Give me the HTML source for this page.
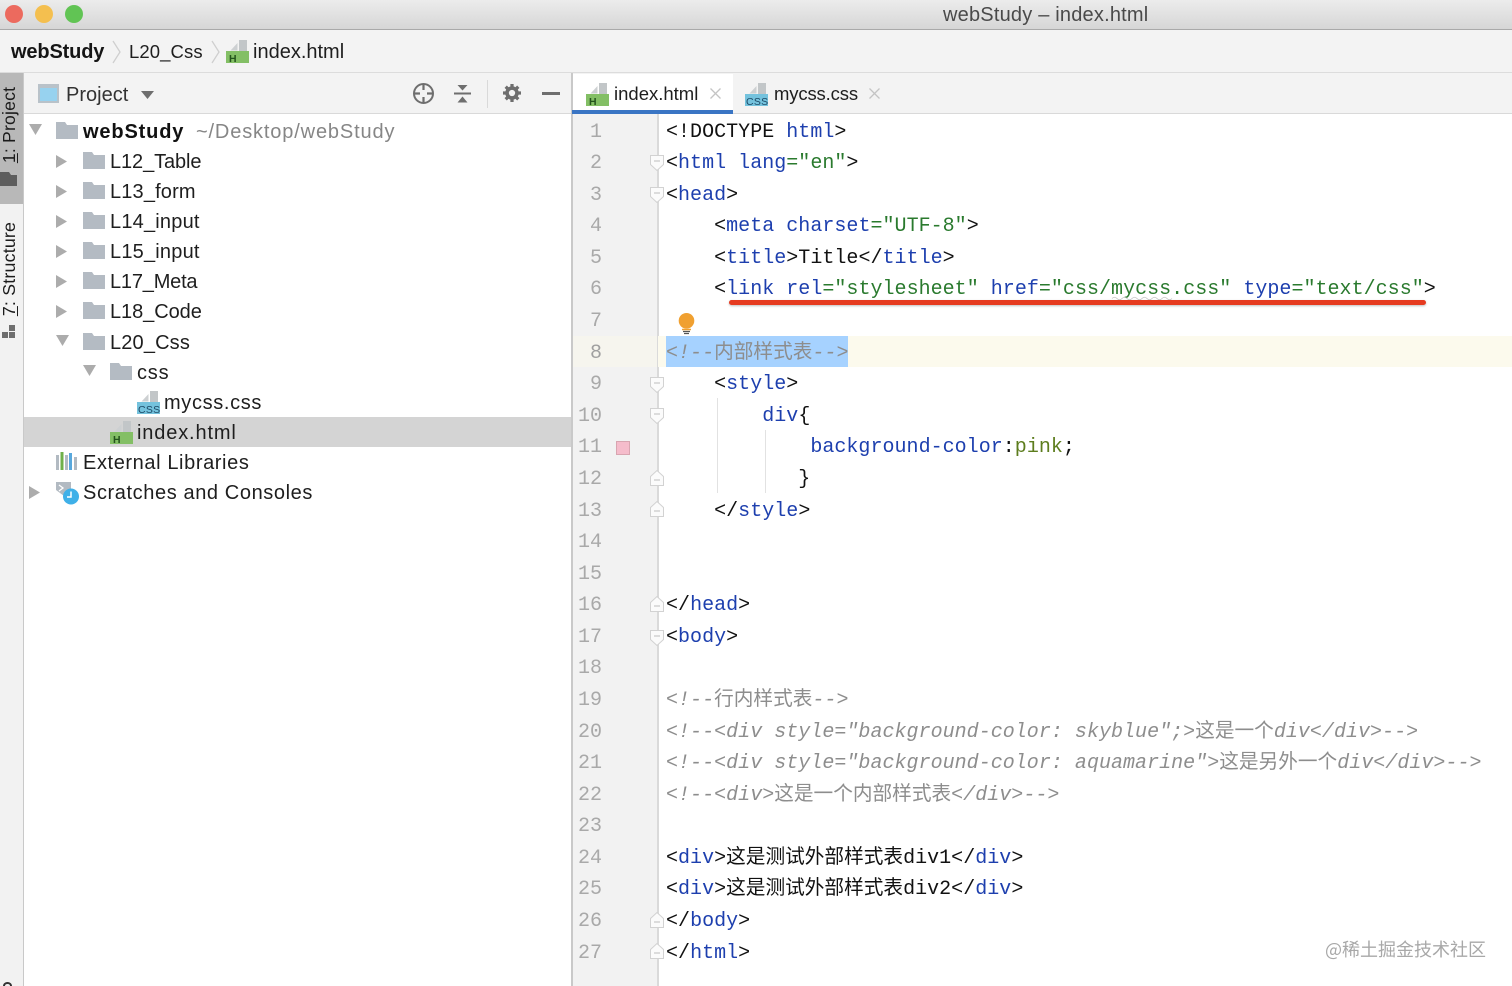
<!DOCTYPE html>
<html lang="zh"><head><meta charset="utf-8"><title>webStudy – index.html</title>
<style>
html,body{margin:0;padding:0;background:#fff}
#p{position:relative;width:1512px;height:986px;overflow:hidden;background:#fff;font-family:"Liberation Sans","Noto Sans CJK SC",sans-serif;color:#1c1c1c}
.a{position:absolute}
.s{position:absolute;font-size:20px;line-height:30px;height:30px;white-space:pre;letter-spacing:.55px;color:#1e1e1e}
.l{position:absolute;left:666px;height:32px;font:20px/32px "Liberation Mono",monospace;letter-spacing:.025px;white-space:pre;color:#111}
.n{position:absolute;left:562px;width:40px;text-align:right;font:20px/32px "Liberation Mono",monospace;color:#a9a9a9}
b{font-weight:400;color:#1d3fae}
i{font-style:normal;color:#2a7a2e}
u{text-decoration:none;font-size:19.66px;line-height:0;letter-spacing:0;font-style:normal;font-family:"Noto Sans CJK SC",sans-serif}
em{font-style:italic;color:#8d8d8d}
svg{position:absolute;overflow:visible}
.v{text-decoration:underline;text-underline-offset:2px}
</style></head><body><div id="p">
<svg width="0" height="0"><defs>
<symbol id="fd" viewBox="0 0 22 17"><path d="M0 0H9L11 3H22V17H0Z" fill="#b4bbc3"/></symbol>
<symbol id="ht" viewBox="0 0 23 23"><path d="M13 0H21V11H13Z" fill="#c2c6c8"/><path d="M11.500 3V10.500H4.500Z" fill="#cdd0d2"/><rect x="0" y="11" width="23" height="12" fill="#83bf65"/><text x="3" y="22" font-family="Liberation Sans" font-size="10.5" font-weight="700" fill="#24541d">H</text></symbol>
<symbol id="cs" viewBox="0 0 23 23"><path d="M13 0H21V11H13Z" fill="#c2c6c8"/><path d="M11.500 3V10.500H4.500Z" fill="#cdd0d2"/><rect x="0" y="11" width="23" height="12" fill="#74c2dd"/><text x="1" y="22" font-family="Liberation Sans" font-size="10.5" letter-spacing=".3" fill="#1c4a66">CSS</text></symbol>
<symbol id="fo" viewBox="0 0 14 16"><path d="M.5 .5H13.500V9.500L7 15.500L.5 9.500Z" fill="#fbfbfb" stroke="#d2d2d2"/><path d="M4 6H10" stroke="#bdbdbd"/></symbol>
<symbol id="fc" viewBox="0 0 14 16"><path d="M.5 15.500H13.500V6.500L7 .5L.5 6.500Z" fill="#fbfbfb" stroke="#d2d2d2"/><path d="M4 10H10" stroke="#bdbdbd"/></symbol>
</defs></svg>

<!-- title bar -->
<div class="a" style="left:0;top:0;width:1512px;height:29px;background:linear-gradient(#ececec,#d6d6d6);border-bottom:1.500px solid #a9a9a9"></div>
<div class="a" style="left:4.500px;top:4.500px;width:18px;height:18px;border-radius:50%;background:#ec6a5e"></div>
<div class="a" style="left:34.500px;top:4.500px;width:18px;height:18px;border-radius:50%;background:#f4bf4f"></div>
<div class="a" style="left:64.500px;top:4.500px;width:18px;height:18px;border-radius:50%;background:#61c454"></div>
<div class="s" style="left:943px;top:1px;color:#4a4a4a;line-height:29px;letter-spacing:.2px">webStudy – index.html</div>

<!-- breadcrumb -->
<div class="a" style="left:0;top:30px;width:1512px;height:42px;background:#f3f3f3;border-bottom:2px solid #dcdcdc"></div>
<div class="s" style="left:11px;top:37px;font-weight:700;color:#151515;letter-spacing:-.15px">webStudy</div>
<svg style="left:112px;top:40px" width="10" height="24"><path d="M1 1L8 12L1 23" fill="none" stroke="#cfcfcf" stroke-width="1.300"/></svg>
<div class="s" style="left:129px;top:37px;font-size:18.500px;letter-spacing:.1px">L20_Css</div>
<svg style="left:211px;top:40px" width="10" height="24"><path d="M1 1L8 12L1 23" fill="none" stroke="#cfcfcf" stroke-width="1.300"/></svg>
<svg style="left:226px;top:40px" width="23" height="23"><use href="#ht"/></svg>
<div class="s" style="left:253px;top:37px;letter-spacing:0">index.html</div>

<!-- left stripe -->
<div class="a" style="left:0;top:73px;width:23px;height:913px;background:#f2f2f2;border-right:1.500px solid #c9c9c9"></div>
<div class="a" style="left:0;top:73px;width:23px;height:131px;background:#b8b8b8"></div>
<div class="s" style="left:-41.500px;top:114px;width:100px;height:22px;line-height:22px;font-size:17.600px;letter-spacing:.2px;transform:rotate(-90deg);transform-origin:50% 50%;text-align:center;color:#1b1b1b"><span class="v">1</span>: Project</div>
<svg style="left:0;top:172px" width="17" height="14"><path d="M0 0H9L11 3H17V14H0Z" fill="#5d5d5d"/></svg>
<div class="s" style="left:-41.500px;top:258px;width:100px;height:22px;line-height:22px;font-size:17.800px;letter-spacing:.2px;transform:rotate(-90deg);text-align:center;color:#1b1b1b"><span class="v">7</span>: Structure</div>
<svg style="left:2px;top:325px" width="15" height="16"><rect x="0" y="7" width="6" height="6" fill="#6e6e6e"/><rect x="7" y="7" width="6" height="6" fill="#6e6e6e"/><rect x="7" y="0" width="6" height="6" fill="#6e6e6e"/></svg>
<svg style="left:3px;top:980px" width="10" height="6"><path d="M1 6C1 2 8 2 8 6" fill="none" stroke="#333" stroke-width="2"/></svg>

<!-- project header -->
<div class="a" style="left:24px;top:73px;width:547px;height:40px;background:#f3f3f3;border-bottom:1.500px solid #d9d9d9"></div>
<div class="a" style="left:38px;top:84px;width:17px;height:13px;border:2px solid #b9c2c9;border-top-width:4px;background:#97d2ef"></div>
<div class="s" style="left:66px;top:80px;color:#333;letter-spacing:0">Project</div>
<svg style="left:141px;top:91px" width="13" height="9"><path d="M0 0H13L6.500 8Z" fill="#6e6e6e"/></svg>
<svg style="left:412px;top:82px" width="23" height="23"><circle cx="11.500" cy="11.500" r="9.500" fill="none" stroke="#6e6e6e" stroke-width="2"/><path d="M11.500 2V8M11.500 15V21M2 11.500H8M15 11.500H21" stroke="#6e6e6e" stroke-width="2.200"/></svg>
<svg style="left:453px;top:83px" width="19" height="21"><path d="M1 10.500H18" stroke="#6e6e6e" stroke-width="2"/><path d="M4.500 2H14.500L9.500 7.500ZM4.500 19.500H14.500L9.500 13.500Z" fill="#6e6e6e"/></svg>
<div class="a" style="left:487px;top:80px;width:1px;height:28px;background:#d9d9d9"></div>
<svg style="left:503px;top:84px" width="18" height="18" viewBox="0 0 20 20"><circle cx="10" cy="10" r="5.500" fill="none" stroke="#6e6e6e" stroke-width="4"/><path d="M10 0V4M10 16V20M0 10H4M16 10H20M3 3L6 6M14 14L17 17M17 3L14 6M6 14L3 17" stroke="#6e6e6e" stroke-width="3.600"/></svg>
<div class="a" style="left:542px;top:92px;width:18px;height:2.500px;background:#6e6e6e"></div>

<!-- selected row -->
<div class="a" style="left:24px;top:417px;width:547px;height:30px;background:#d4d4d4"></div>

<!-- tree -->
<svg style="left:29px;top:124px" width="14" height="12"><path d="M0 0H13L6.500 11Z" fill="#acacac"/></svg>
<svg style="left:56px;top:122px" width="22" height="17"><use href="#fd"/></svg>
<div class="s" style="left:83px;top:117px;font-weight:700;color:#111;letter-spacing:.85px">webStudy</div>
<div class="s" style="left:196px;top:117px;color:#868686;letter-spacing:.85px">~/Desktop/webStudy</div>

<svg style="left:56px;top:155px" width="12" height="13"><path d="M0 0L11 6.500L0 13Z" fill="#acacac"/></svg>
<svg style="left:83px;top:152px" width="22" height="17"><use href="#fd"/></svg>
<div class="s" style="left:110px;top:147px;letter-spacing:-.1px">L12_Table</div>
<svg style="left:56px;top:185px" width="12" height="13"><path d="M0 0L11 6.500L0 13Z" fill="#acacac"/></svg>
<svg style="left:83px;top:182px" width="22" height="17"><use href="#fd"/></svg>
<div class="s" style="left:110px;top:177px;letter-spacing:.15px">L13_form</div>
<svg style="left:56px;top:215px" width="12" height="13"><path d="M0 0L11 6.500L0 13Z" fill="#acacac"/></svg>
<svg style="left:83px;top:212px" width="22" height="17"><use href="#fd"/></svg>
<div class="s" style="left:110px;top:207px;letter-spacing:.2px">L14_input</div>
<svg style="left:56px;top:245px" width="12" height="13"><path d="M0 0L11 6.500L0 13Z" fill="#acacac"/></svg>
<svg style="left:83px;top:242px" width="22" height="17"><use href="#fd"/></svg>
<div class="s" style="left:110px;top:237px;letter-spacing:.2px">L15_input</div>
<svg style="left:56px;top:275px" width="12" height="13"><path d="M0 0L11 6.500L0 13Z" fill="#acacac"/></svg>
<svg style="left:83px;top:272px" width="22" height="17"><use href="#fd"/></svg>
<div class="s" style="left:110px;top:267px;letter-spacing:-.2px">L17_Meta</div>
<svg style="left:56px;top:305px" width="12" height="13"><path d="M0 0L11 6.500L0 13Z" fill="#acacac"/></svg>
<svg style="left:83px;top:302px" width="22" height="17"><use href="#fd"/></svg>
<div class="s" style="left:110px;top:297px;letter-spacing:-.07px">L18_Code</div>
<svg style="left:56px;top:335px" width="14" height="12"><path d="M0 0H13L6.500 11Z" fill="#acacac"/></svg>
<svg style="left:83px;top:333px" width="22" height="17"><use href="#fd"/></svg>
<div class="s" style="left:110px;top:328px;letter-spacing:.15px">L20_Css</div>
<svg style="left:83px;top:365px" width="14" height="12"><path d="M0 0H13L6.500 11Z" fill="#acacac"/></svg>
<svg style="left:110px;top:363px" width="22" height="17"><use href="#fd"/></svg>
<div class="s" style="left:137px;top:358px;letter-spacing:.8px">css</div>
<svg style="left:137px;top:391px" width="23" height="23"><use href="#cs"/></svg>
<div class="s" style="left:164px;top:388px;letter-spacing:.65px">mycss.css</div>
<svg style="left:110px;top:421px" width="23" height="23"><use href="#ht"/></svg>
<div class="s" style="left:137px;top:418px;letter-spacing:.85px">index.html</div>
<svg style="left:56px;top:452px" width="21" height="18"><rect x="0" y="3" width="3" height="15" fill="#b2bac2"/><rect x="4.500" y="0" width="3" height="18" fill="#6fb04a"/><rect x="9" y="3" width="3" height="15" fill="#b2bac2"/><rect x="13" y="1" width="3" height="17" fill="#58a8dd"/><rect x="18" y="5" width="3" height="13" fill="#b2bac2"/></svg>
<div class="s" style="left:83px;top:448px;letter-spacing:.6px">External Libraries</div>
<svg style="left:29px;top:486px" width="12" height="13"><path d="M0 0L11 6.500L0 13Z" fill="#acacac"/></svg>
<svg style="left:56px;top:482px" width="23" height="23"><path d="M0 0H15V9L8 14L0 8Z" fill="#b2bac2"/><path d="M3 3L7 6L3 9" fill="none" stroke="#fff" stroke-width="1.300"/><circle cx="15" cy="14.500" r="8" fill="#3fb0e8"/><path d="M15 9.500V15H11" fill="none" stroke="#fff" stroke-width="1.500"/></svg>
<div class="s" style="left:83px;top:478px;letter-spacing:.6px">Scratches and Consoles</div>

<!-- splitter -->
<div class="a" style="left:571px;top:73px;width:1.500px;height:913px;background:#c9c9c9"></div>

<!-- tabs -->
<div class="a" style="left:573px;top:73px;width:939px;height:40px;background:#f3f3f3;border-bottom:1.500px solid #d9d9d9"></div>
<div class="a" style="left:573px;top:74px;width:160px;height:36px;background:#fff"></div>
<div class="a" style="left:572px;top:110px;width:161px;height:4px;background:#3a75c4"></div>
<svg style="left:586px;top:83px" width="23" height="23"><use href="#ht"/></svg>
<div class="s" style="left:614px;top:79px;font-size:18.500px;letter-spacing:0">index.html</div>
<svg style="left:710px;top:88px" width="11" height="11"><path d="M.5 .5L10.500 10.500M10.500 .5L.5 10.500" stroke="#c4c4c4" stroke-width="1.300"/></svg>
<svg style="left:745px;top:83px" width="23" height="23"><use href="#cs"/></svg>
<div class="s" style="left:774px;top:79px;font-size:18.500px;letter-spacing:-.15px">mycss.css</div>
<svg style="left:869px;top:88px" width="11" height="11"><path d="M.5 .5L10.500 10.500M10.500 .5L.5 10.500" stroke="#c4c4c4" stroke-width="1.300"/></svg>

<!-- gutter -->
<div class="a" style="left:573px;top:114px;width:84px;height:872px;background:#f2f2f2"></div>
<div class="a" style="left:657px;top:114px;width:1.500px;height:872px;background:#dadada"></div>
<div class="a" style="left:573px;top:336px;width:84px;height:31px;background:#f6f5ee"></div>
<div class="a" style="left:658px;top:336px;width:854px;height:31px;background:#fcfaed"></div>
<div class="a" style="left:666px;top:336px;width:182px;height:31px;background:#a6d2ff"></div>

<div class="n" style="top:116.500px">1</div><div class="n" style="top:148.100px">2</div><div class="n" style="top:179.700px">3</div><div class="n" style="top:211.200px">4</div><div class="n" style="top:242.800px">5</div><div class="n" style="top:274.400px">6</div><div class="n" style="top:306px">7</div><div class="n" style="top:337.600px;color:#a0a0a0">8</div><div class="n" style="top:369.100px">9</div><div class="n" style="top:400.700px">10</div><div class="n" style="top:432.300px">11</div><div class="n" style="top:463.900px">12</div><div class="n" style="top:495.500px">13</div><div class="n" style="top:527px">14</div><div class="n" style="top:558.600px">15</div><div class="n" style="top:590.200px">16</div><div class="n" style="top:621.800px">17</div><div class="n" style="top:653.400px">18</div><div class="n" style="top:684.900px">19</div><div class="n" style="top:716.500px">20</div><div class="n" style="top:748.100px">21</div><div class="n" style="top:779.700px">22</div><div class="n" style="top:811.300px">23</div><div class="n" style="top:842.800px">24</div><div class="n" style="top:874.400px">25</div><div class="n" style="top:906px">26</div><div class="n" style="top:937.600px">27</div>

<!-- fold markers -->
<svg style="left:650px;top:155px" width="14" height="16"><use href="#fo"/></svg>
<svg style="left:650px;top:187px" width="14" height="16"><use href="#fo"/></svg>
<svg style="left:650px;top:377px" width="14" height="16"><use href="#fo"/></svg>
<svg style="left:650px;top:408px" width="14" height="16"><use href="#fo"/></svg>
<svg style="left:650px;top:470px" width="14" height="16"><use href="#fc"/></svg>
<svg style="left:650px;top:501px" width="14" height="16"><use href="#fc"/></svg>
<svg style="left:650px;top:596px" width="14" height="16"><use href="#fc"/></svg>
<svg style="left:650px;top:630px" width="14" height="16"><use href="#fo"/></svg>
<svg style="left:650px;top:912px" width="14" height="16"><use href="#fc"/></svg>
<svg style="left:650px;top:943px" width="14" height="16"><use href="#fc"/></svg>

<div class="a" style="left:616px;top:441px;width:12px;height:12px;background:#f5bccb;border:.5px solid #d8a5b0"></div>

<!-- indent guides -->
<div class="a" style="left:717px;top:398px;width:1px;height:95px;background:#e2e2e2"></div>
<div class="a" style="left:765px;top:430px;width:1px;height:63px;background:#e2e2e2"></div>

<!-- code -->
<div class="l" style="top:114px;top:116.500px">&lt;!DOCTYPE <b>html</b>&gt;</div>
<div class="l" style="top:148.100px">&lt;<b>html</b> <b>lang</b><i>="en"</i>&gt;</div>
<div class="l" style="top:179.700px">&lt;<b>head</b>&gt;</div>
<div class="l" style="top:211.200px">    &lt;<b>meta</b> <b>charset</b><i>="UTF-8"</i>&gt;</div>
<div class="l" style="top:242.800px">    &lt;<b>title</b>&gt;Title&lt;/<b>title</b>&gt;</div>
<div class="l" style="top:274.400px">    &lt;<b>link</b> <b>rel</b><i>="stylesheet"</i> <b>href</b><i>="css/mycss.css"</i> <b>type</b><i>="text/css"</i>&gt;</div>
<div class="l" style="top:337.600px"><em>&lt;!--<u>内部样式表</u>--&gt;</em></div>
<div class="l" style="top:369.100px">    &lt;<b>style</b>&gt;</div>
<div class="l" style="top:400.700px">        <b>div</b>{</div>
<div class="l" style="top:432.300px">            <b>background-color</b>:<i style="color:#5d7d1e">pink</i>;</div>
<div class="l" style="top:463.900px">           }</div>
<div class="l" style="top:495.500px">    &lt;/<b>style</b>&gt;</div>
<div class="l" style="top:590.200px">&lt;/<b>head</b>&gt;</div>
<div class="l" style="top:621.800px">&lt;<b>body</b>&gt;</div>
<div class="l" style="top:684.900px"><em>&lt;!--<u>行内样式表</u>--&gt;</em></div>
<div class="l" style="top:716.500px"><em>&lt;!--&lt;div style="background-color: skyblue";&gt;<u>这是一个</u>div&lt;/div&gt;--&gt;</em></div>
<div class="l" style="top:748.100px"><em>&lt;!--&lt;div style="background-color: aquamarine"&gt;<u>这是另外一个</u>div&lt;/div&gt;--&gt;</em></div>
<div class="l" style="top:779.700px"><em>&lt;!--&lt;div&gt;<u>这是一个内部样式表</u>&lt;/div&gt;--&gt;</em></div>
<div class="l" style="top:842.800px">&lt;<b>div</b>&gt;<u>这是测试外部样式表</u>div1&lt;/<b>div</b>&gt;</div>
<div class="l" style="top:874.400px">&lt;<b>div</b>&gt;<u>这是测试外部样式表</u>div2&lt;/<b>div</b>&gt;</div>
<div class="l" style="top:906px">&lt;/<b>body</b>&gt;</div>
<div class="l" style="top:937.600px">&lt;/<b>html</b>&gt;</div>

<!-- spellcheck squiggle + annotation underline -->
<svg style="left:1112px;top:297px" width="60" height="3"><path d="M0 1.500Q2.500 -1 5 1.500T10 1.500T15 1.500T20 1.500T25 1.500T30 1.500T35 1.500T40 1.500T45 1.500T50 1.500T55 1.500T60 1.500" fill="none" stroke="#c4c4c4" stroke-width=".8"/></svg>
<div class="a" style="left:729px;top:300px;width:697px;height:5px;border-radius:3px;background:#e63b20;box-shadow:0 1px 2px rgba(0,0,0,.25)"></div>

<!-- bulb -->
<svg style="left:678px;top:313px" width="17" height="21"><circle cx="8.500" cy="7.800" r="7.800" fill="#f0a030"/><path d="M4 16.500H13" stroke="#f0a030" stroke-width="1.500"/><path d="M5 18.500H12M6 20.500H11" stroke="#555" stroke-width="1.200"/></svg>

<!-- watermark -->
<div class="a" style="left:1325px;top:936px;font:18px/26px 'Noto Sans CJK SC',sans-serif;color:#a8a8a8;white-space:pre">@稀土掘金技术社区</div>
</div></body></html>
